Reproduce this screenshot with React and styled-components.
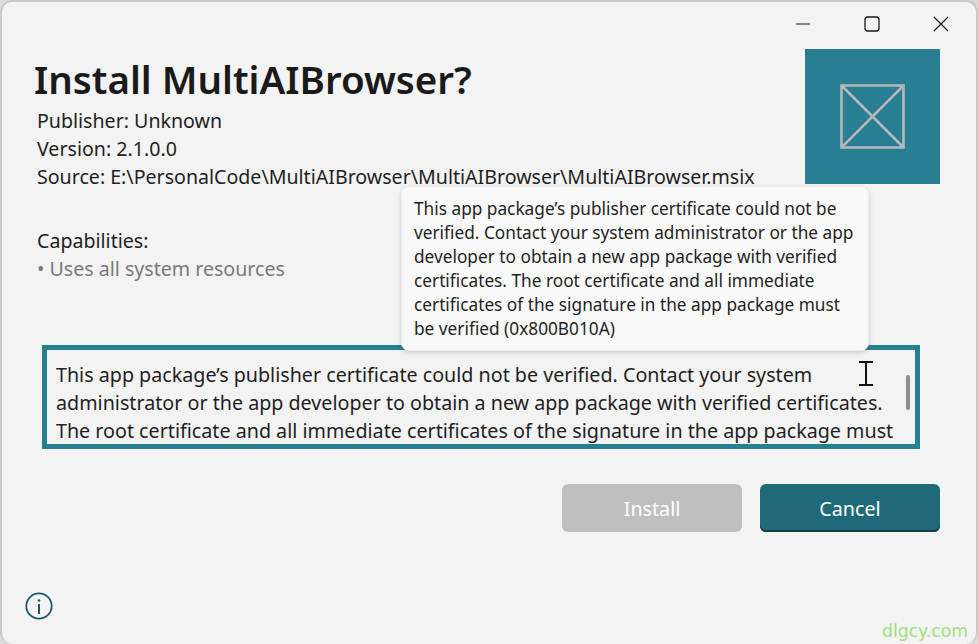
import React from "react";
import styled, { createGlobalStyle } from "styled-components";

const Global = createGlobalStyle`
  html, body { margin: 0; padding: 0; background: #dcdcdc; }
  #root { width: 978px; height: 644px; overflow: hidden; }
  * { box-sizing: border-box; }
`;

const Window = styled.div`
  position: relative;
  width: 978px;
  height: 644px;
  display: flex;
  flex-direction: column;
  background: #f3f3f3;
  border-top: 2px solid #c9c9c9;
  border-left: 2px solid #c9c9c9;
  border-right: 2px solid #c9c9c9;
  border-radius: 12px;
  overflow: hidden;
  font-family: "Noto Sans", "Open Sans", sans-serif;
  color: #1b1b1b;
`;

const TitleBar = styled.div`
  height: 47px;
  padding-right: 1px;
  display: flex;
  justify-content: flex-end;
  align-items: flex-start;
  flex: none;
`;

const WinButton = styled.div`
  width: 69px;
  height: 44px;
  display: flex;
  align-items: center;
  justify-content: center;
`;

const Header = styled.div`
  display: flex;
  justify-content: space-between;
  align-items: flex-start;
  padding: 0 36px 0 32px;
  height: 135px;
  flex: none;
`;

const Intro = styled.div`
  display: flex;
  flex-direction: column;
`;

const Title = styled.h1`
  margin: 3px 0 0;
  font-size: 38.5px;
  line-height: 55px;
  font-weight: 600;
  color: #1a1a1a;
`;

const Meta = styled.div`
  margin-left: 3px;
  font-size: 19.6px;
  line-height: 28px;
  white-space: nowrap;
  color: #1f1f1f;
`;

const Logo = styled.div`
  width: 135px;
  height: 135px;
  background: #287e92;
  display: flex;
  align-items: center;
  justify-content: center;
  flex: none;
`;

const Capabilities = styled.div`
  padding: 43px 0 0 35px;
  height: 161px;
  flex: none;
  font-size: 19.6px;
  line-height: 28px;
`;

const CapLabel = styled.div`
  color: #1f1f1f;
`;

const CapItem = styled.div`
  color: #7a7a7a;
`;

const MessageBox = styled.div`
  position: relative;
  margin-left: 40px;
  width: 878px;
  height: 104px;
  border: 5px solid #258090;
  padding: 11px 9px 0 9px;
  overflow: hidden;
  flex: none;
  font-size: 19.7px;
  line-height: 28px;
  color: #1f1f1f;
  white-space: nowrap;
`;

const ScrollThumb = styled.div`
  position: absolute;
  right: 5px;
  top: 25px;
  width: 4px;
  height: 35px;
  border-radius: 2px;
  background: #8f8f8f;
`;

const Actions = styled.div`
  margin-top: 35px;
  padding-right: 36px;
  display: flex;
  justify-content: flex-end;
  gap: 18px;
  flex: none;
`;

const ActionButton = styled.div`
  width: 180px;
  height: 48px;
  border-radius: 6px;
  display: flex;
  align-items: center;
  justify-content: center;
  font-size: 19.7px;
  color: #ffffff;
  background: ${(p) => (p.$primary ? "#1f6a78" : "#bfbfbf")};
  box-shadow: ${(p) => (p.$primary ? "inset 0 -2px 0 #143f48" : "none")};
`;

const Footer = styled.div`
  margin-top: auto;
  padding: 0 0 24px 23px;
  display: flex;
  flex: none;
`;

const Tooltip = styled.div`
  position: absolute;
  left: 399px;
  top: 184px;
  width: 468px;
  height: 165px;
  padding: 10px 12px;
  background: #f9f9f9;
  border-radius: 8px;
  border: 1px solid #ededed;
  box-shadow: 0 2px 5px rgba(0, 0, 0, 0.16);
  font-size: 17.25px;
  line-height: 24px;
  color: #1f1f1f;
  white-space: nowrap;
`;

const Cursor = styled.svg`
  position: absolute;
  left: 857px;
  top: 359px;
`;

const Watermark = styled.div`
  position: absolute;
  right: 8px;
  bottom: 2px;
  font-family: "DejaVu Sans", sans-serif;
  font-size: 17.2px;
  line-height: 22px;
  color: #9fe07f;
`;

const tooltipLines = [
  "This app package’s publisher certificate could not be",
  "verified. Contact your system administrator or the app",
  "developer to obtain a new app package with verified",
  "certificates. The root certificate and all immediate",
  "certificates of the signature in the app package must",
  "be verified (0x800B010A)",
];

const messageLines = [
  "This app package’s publisher certificate could not be verified. Contact your system",
  "administrator or the app developer to obtain a new app package with verified certificates.",
  "The root certificate and all immediate certificates of the signature in the app package must",
];

export default function App() {
  return (
    <>
      <Global />
      <Window>
        <TitleBar>
          <WinButton>
            <svg width="16" height="16" viewBox="0 0 16 16">
              <path d="M1 8h14" stroke="#1a1a1a" strokeWidth="1.2" fill="none" />
            </svg>
          </WinButton>
          <WinButton>
            <svg width="16" height="16" viewBox="0 0 16 16">
              <rect x="1" y="1" width="14" height="14" rx="2.5" stroke="#1a1a1a" strokeWidth="1.3" fill="none" />
            </svg>
          </WinButton>
          <WinButton>
            <svg width="16" height="16" viewBox="0 0 16 16">
              <path d="M1 1l14 14M15 1L1 15" stroke="#1a1a1a" strokeWidth="1.2" fill="none" />
            </svg>
          </WinButton>
        </TitleBar>
        <Header>
          <Intro>
            <Title>Install MultiAIBrowser?</Title>
            <Meta>Publisher: Unknown</Meta>
            <Meta>Version: 2.1.0.0</Meta>
            <Meta>Source: E:\PersonalCode\MultiAIBrowser\MultiAIBrowser\MultiAIBrowser.msix</Meta>
          </Intro>
          <Logo>
            <svg width="65" height="65" viewBox="0 0 65 65">
              <path d="M1.5 1.5h62v62h-62zM1.5 1.5l62 62M63.5 1.5l-62 62" stroke="#b4b8ba" strokeWidth="2.6" fill="none" />
            </svg>
          </Logo>
        </Header>
        <Capabilities>
          <CapLabel>Capabilities:</CapLabel>
          <CapItem>• Uses all system resources</CapItem>
        </Capabilities>
        <MessageBox>
          {messageLines.map((line) => (
            <div key={line}>{line}</div>
          ))}
          <ScrollThumb />
        </MessageBox>
        <Actions>
          <ActionButton>Install</ActionButton>
          <ActionButton $primary>Cancel</ActionButton>
        </Actions>
        <Footer>
          <svg width="28" height="28" viewBox="0 0 28 28">
            <circle cx="14" cy="14" r="12.7" stroke="#1c5a68" strokeWidth="1.8" fill="none" />
            <path d="M14 12v10" stroke="#1c5a68" strokeWidth="2" fill="none" />
            <circle cx="14" cy="8.5" r="1.3" fill="#1c5a68" />
          </svg>
        </Footer>
        <Tooltip>
          {tooltipLines.map((line) => (
            <div key={line}>{line}</div>
          ))}
        </Tooltip>
        <Cursor width="14" height="25" viewBox="0 0 14 25">
          <path d="M0 1h14M0 24h14M7 1v23" stroke="#111" strokeWidth="2" fill="none" />
        </Cursor>
        <Watermark>dlgcy.com</Watermark>
      </Window>
    </>
  );
}
